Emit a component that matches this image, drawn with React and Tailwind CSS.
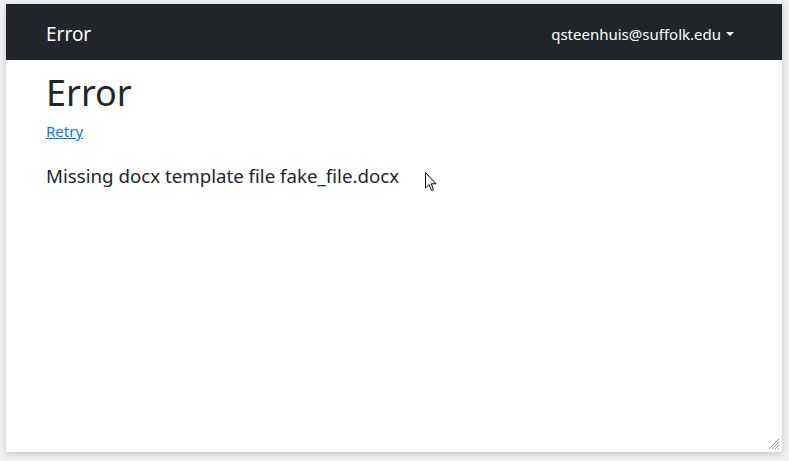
import React from "react";

const Cursor = () => (
  <svg width="13" height="20" viewBox="0 0 13 20" className="absolute left-[419px] top-[168px]">
    <path d="M0.5 0.5 L0.5 16 L4 12.5 L6.5 18.5 L8.5 17.6 L6.2 11.8 L11 11.8 Z" fill="#fff" stroke="#000" strokeWidth="1" strokeLinejoin="miter" />
  </svg>
);

const Grip = () => (
  <svg width="12" height="12" viewBox="0 0 12 12" className="absolute right-[2px] bottom-[2px]">
    <path d="M11 1 L1 11 M11 4 L4 11 M11 7 L7 11 M11 10 L10 11" stroke="#9a9a9a" strokeWidth="1" />
  </svg>
);

const App = () => {
  return (
    <div className="w-[789px] h-[461px] bg-[#f0f0f0] pt-[4px] pl-[6px] pr-[7px] pb-[9px] font-['Noto_Sans',sans-serif]">
      <div className="relative w-full h-full bg-white shadow-[0_2px_6px_rgba(0,0,0,0.18)] overflow-hidden">
        <nav className="h-[56px] bg-[#212529] flex items-center justify-between pt-[4px] pl-[40px] pr-[48px]">
          <span className="text-white text-[19px] leading-none">Error</span>
          <span className="text-white text-[15px] leading-none flex items-center">
            qsteenhuis@suffolk.edu
            <span className="ml-[5px] w-0 h-0 border-l-[4px] border-r-[4px] border-t-[4px] border-l-transparent border-r-transparent border-t-white"></span>
          </span>
        </nav>
        <main className="px-[40px] pt-[11px] text-[#212529]">
          <h1 className="text-[36px] leading-[1.2] font-normal">Error</h1>
          <a href="#" className="block mt-[7px] text-[15px] text-[#007bff] underline leading-[1.4]">Retry</a>
          <p className="mt-[22px] text-[18.7px] leading-[1.3]">Missing docx template file fake_file.docx</p>
        </main>
        <Cursor />
        <Grip />
      </div>
    </div>
  );
};

export default App;
